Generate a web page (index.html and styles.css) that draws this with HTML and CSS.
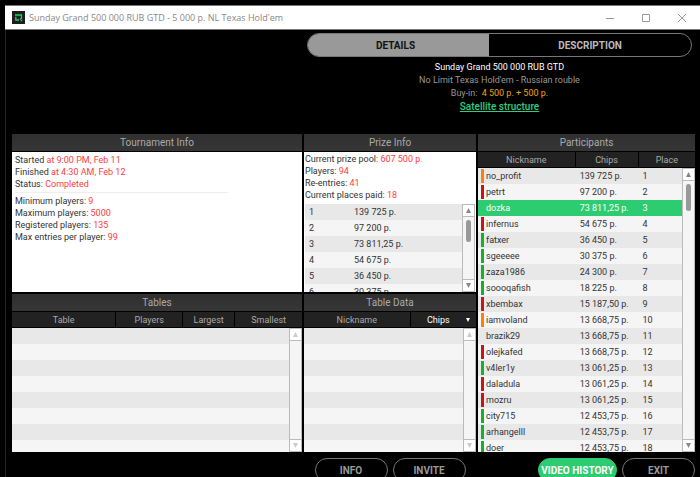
FILE: index.html
```
<!DOCTYPE html>
<html lang="en">
<head>
    <meta charset="UTF-8">
    <meta name="viewport" content="width=device-width, initial-scale=1.0">
    <title>Sunday Grand 500 000 RUB GTD</title>
    <link rel="stylesheet" href="styles.css">
</head>
<body>
    <div class="window">
        <header class="titlebar">
            <svg class="logo" viewBox="0 0 13 13">
                <rect width="13" height="13" fill="#1c1e20"/>
                <path d="M3 4H9.5V7.2L8 8.5M3.8 5.8V9H7" fill="none" stroke="#1fd655" stroke-width="1.3"/>
                <path d="M8.8 8.8H10.2V10.2H8.8Z" fill="#1fd655"/>
            </svg>
            <h1>Sunday Grand 500 000 RUB GTD - 5 000 p. NL Texas Hold'em</h1>
            <div class="window-controls">
                <button type="button" aria-label="Minimize"><svg viewBox="0 0 10 10"><path d="M1 5.5H9"/></svg></button>
                <button type="button" aria-label="Maximize"><svg viewBox="0 0 10 10"><path d="M1.5 1.5H8.5V8.5H1.5Z"/></svg></button>
                <button type="button" aria-label="Close"><svg viewBox="0 0 10 10"><path d="M1 1L9 9M9 1L1 9"/></svg></button>
            </div>
        </header>

        <div class="content">
            <!-- Tabs and tournament summary -->
            <section class="summary">
                <div class="tabs">
                    <button type="button" class="tab active">DETAILS</button>
                    <button type="button" class="tab">DESCRIPTION</button>
                </div>
                <p class="name">Sunday Grand 500 000 RUB GTD</p>
                <p>No Limit Texas Hold'em - Russian rouble</p>
                <p>Buy-in: <span class="buyin">4 500 p. + 500 p.</span></p>
                <p><a href="#">Satellite structure</a></p>
            </section>

            <section class="panel">
                <h2>Tournament Info</h2>
                <div class="info">
                    <p>Started <b>at 9:00 PM, Feb 11</b></p>
                    <p>Finished <b>at 4:30 AM, Feb 12</b></p>
                    <p>Status: <b>Completed</b></p>
                    <hr>
                    <p>Minimum players: <b>9</b></p>
                    <p>Maximum players: <b>5000</b></p>
                    <p>Registered players: <b>135</b></p>
                    <p>Max entries per player: <b>99</b></p>
                </div>
            </section>

            <section class="panel">
                <h2>Prize Info</h2>
                <div class="info prize">
                    <p>Current prize pool: <b>607 500 p.</b></p>
                    <p>Players: <b>94</b></p>
                    <p>Re-entries: <b>41</b></p>
                    <p>Current places paid: <b>18</b></p>
                </div>
                <div class="list prize-list">
                    <table>
                        <colgroup><col class="w-rank"><col></colgroup>
                        <tbody>
                            <tr><td>1</td><td>139 725 p.</td></tr>
                            <tr><td>2</td><td>97 200 p.</td></tr>
                            <tr><td>3</td><td>73 811,25 p.</td></tr>
                            <tr><td>4</td><td>54 675 p.</td></tr>
                            <tr><td>5</td><td>36 450 p.</td></tr>
                            <tr><td>6</td><td>30 375 p.</td></tr>
                        </tbody>
                    </table>
                    <div class="scrollbar">
                        <button type="button" aria-label="Scroll up"><svg viewBox="0 0 6 6"><path d="M3 0L6 6H0Z"/></svg></button>
                        <div class="thumb"></div>
                        <button type="button" aria-label="Scroll down"><svg viewBox="0 0 6 6"><path d="M0 0H6L3 6Z"/></svg></button>
                    </div>
                </div>
            </section>

            <section class="panel participants">
                <h2>Participants</h2>
                <div class="list with-head">
                    <table>
                        <colgroup><col class="w-nick"><col class="w-chips"><col></colgroup>
                        <thead>
                            <tr><th>Nickname</th><th>Chips</th><th>Place</th></tr>
                        </thead>
                        <tbody>
                            <tr><td><i class="mark orange"></i>no_profit</td><td>139 725 p.</td><td>1</td></tr>
                            <tr><td><i class="mark red"></i>petrt</td><td>97 200 p.</td><td>2</td></tr>
                            <tr class="selected"><td><i class="mark"></i>dozka</td><td>73 811,25 p.</td><td>3</td></tr>
                            <tr><td><i class="mark red"></i>infernus</td><td>54 675 p.</td><td>4</td></tr>
                            <tr><td><i class="mark green"></i>fatxer</td><td>36 450 p.</td><td>5</td></tr>
                            <tr><td><i class="mark green"></i>sgeeeee</td><td>30 375 p.</td><td>6</td></tr>
                            <tr><td><i class="mark green"></i>zaza1986</td><td>24 300 p.</td><td>7</td></tr>
                            <tr><td><i class="mark green"></i>soooqafish</td><td>18 225 p.</td><td>8</td></tr>
                            <tr><td><i class="mark red"></i>xbembax</td><td>15 187,50 p.</td><td>9</td></tr>
                            <tr><td><i class="mark orange"></i>iamvoland</td><td>13 668,75 p.</td><td>10</td></tr>
                            <tr><td><i class="mark"></i>brazik29</td><td>13 668,75 p.</td><td>11</td></tr>
                            <tr><td><i class="mark red"></i>olejkafed</td><td>13 668,75 p.</td><td>12</td></tr>
                            <tr><td><i class="mark green"></i>v4ler1y</td><td>13 061,25 p.</td><td>13</td></tr>
                            <tr><td><i class="mark red"></i>daladula</td><td>13 061,25 p.</td><td>14</td></tr>
                            <tr><td><i class="mark red"></i>mozru</td><td>13 061,25 p.</td><td>15</td></tr>
                            <tr><td><i class="mark green"></i>city715</td><td>12 453,75 p.</td><td>16</td></tr>
                            <tr><td><i class="mark green"></i>arhangelll</td><td>12 453,75 p.</td><td>17</td></tr>
                            <tr><td><i class="mark green"></i>doer</td><td>12 453,75 p.</td><td>18</td></tr>
                        </tbody>
                    </table>
                    <div class="scrollbar">
                        <button type="button" aria-label="Scroll up"><svg viewBox="0 0 6 6"><path d="M3 0L6 6H0Z"/></svg></button>
                        <div class="thumb long"></div>
                        <button type="button" aria-label="Scroll down"><svg viewBox="0 0 6 6"><path d="M0 0H6L3 6Z"/></svg></button>
                    </div>
                </div>
            </section>

            <section class="panel">
                <h2>Tables</h2>
                <div class="list with-head">
                    <table>
                        <colgroup><col class="w-table"><col class="w-players"><col class="w-largest"><col></colgroup>
                        <thead>
                            <tr><th>Table</th><th>Players</th><th>Largest</th><th>Smallest</th></tr>
                        </thead>
                    </table>
                    <div class="scrollbar disabled">
                        <button type="button" aria-label="Scroll up" disabled><svg viewBox="0 0 6 6"><path d="M3 0L6 6H0Z"/></svg></button>
                        <button type="button" aria-label="Scroll down" disabled><svg viewBox="0 0 6 6"><path d="M0 0H6L3 6Z"/></svg></button>
                    </div>
                </div>
            </section>

            <section class="panel">
                <h2>Table Data</h2>
                <div class="list with-head">
                    <table>
                        <colgroup><col class="w-name"><col></colgroup>
                        <thead>
                            <tr>
                                <th>Nickname</th>
                                <th><button type="button" class="sort"><span>Chips</span><svg viewBox="0 0 4 4"><path d="M0 0H4L2 4Z"/></svg></button></th>
                            </tr>
                        </thead>
                    </table>
                    <div class="scrollbar disabled">
                        <button type="button" aria-label="Scroll up" disabled><svg viewBox="0 0 6 6"><path d="M3 0L6 6H0Z"/></svg></button>
                        <button type="button" aria-label="Scroll down" disabled><svg viewBox="0 0 6 6"><path d="M0 0H6L3 6Z"/></svg></button>
                    </div>
                </div>
            </section>

            <div class="actions middle">
                <button type="button">INFO</button>
                <button type="button">INVITE</button>
            </div>
            <div class="actions right">
                <button type="button" class="primary">VIDEO HISTORY</button>
                <button type="button">EXIT</button>
            </div>
        </div>
    </div>
</body>
</html>
```
FILE: styles.css
```
* {
    box-sizing: border-box;
}

body {
    margin: 0;
    padding: 5px 0 0 5px;
    height: 100vh;
    overflow: hidden;
    background-color: #000;
    font-family: Roboto, "Liberation Sans", sans-serif;
    font-size: 10px;
    color: #333;
}

h1, h2, p {
    margin: 0;
    font-weight: normal;
}

button {
    margin: 0;
    padding: 0;
    border: none;
    background: none;
    font: inherit;
    color: inherit;
    cursor: pointer;
}

svg {
    display: block;
}

.window {
    border-left: 1px solid #222;
}

/* Title bar */
.titlebar {
    display: flex;
    align-items: center;
    height: 25px;
    margin-left: -1px;
    padding-left: 7px;
    background-color: #fff;
    border-top: 1px solid #777;
    border-bottom: 1px solid #777;
}

.logo {
    width: 13px;
    height: 13px;
}

.titlebar h1 {
    flex: 1;
    margin-left: 4px;
    font-family: "Open Sans", "Noto Sans", sans-serif;
    font-size: 9px;
    color: #888;
    white-space: nowrap;
}

.window-controls {
    display: flex;
}

.window-controls button {
    width: 36px;
    height: 23px;
    padding: 0 13px;
}

.window-controls svg {
    width: 10px;
    height: 10px;
    fill: none;
    stroke: #999;
}

/* Main grid */
.content {
    display: grid;
    grid-template-columns: minmax(0, 290fr) minmax(0, 172fr) minmax(0, 217fr);
    grid-template-rows: 99px 158px 158px;
    gap: 2px;
    padding: 3px 5px 0 6px;
}

.summary {
    grid-column: 2 / -1;
    padding: 0 3px;
    text-align: center;
    font-size: 9px;
    line-height: 13px;
    color: #999;
}

.tabs {
    display: flex;
    height: 24px;
    margin-bottom: 4px;
    border: 1px solid #777;
    border-radius: 12px;
    overflow: hidden;
    font-size: 10px;
}

.tab {
    flex: 202;
    font-weight: bold;
    color: #bbb;
}

.tab.active {
    flex: 175;
    padding-right: 6px;
    background-color: #999;
    color: #111;
}

.summary .name {
    color: #fff;
}

.buyin {
    margin-left: 2px;
    color: #f0a010;
}

.summary a {
    font-size: 10px;
    font-weight: 500;
    color: #2ecc80;
}

/* Panels */
.panel {
    display: flex;
    flex-direction: column;
    min-height: 0;
    background-color: #fff;
}

.panel h2 {
    height: 18px;
    line-height: 18px;
    background: linear-gradient(#303030, #363636);
    border-bottom: 1px solid #000;
    font-size: 10px;
    text-align: center;
    color: #aaa;
}

.participants {
    grid-row: 2 / 4;
    grid-column: 3;
}

.info {
    padding: 2px 3px;
    font-size: 9px;
    line-height: 12px;
}

.info b {
    font-weight: normal;
    color: #ff3b3b;
}

.info hr {
    width: 75%;
    height: 1px;
    margin: 2px 0;
    border: none;
    background-color: #eee;
}

.prize {
    padding: 1px 1px 3px;
}

/* Striped lists */
.list {
    position: relative;
    flex: 1;
    min-height: 0;
    overflow: hidden;
    background: repeating-linear-gradient(#e8e8e8 0 16px, #f5f5f5 16px 32px);
    font-size: 9px;
}

/* the 16px header row shifts the stripes by one */
.with-head {
    background: repeating-linear-gradient(#f5f5f5 0 16px, #e8e8e8 16px 32px);
}

.prize-list {
    margin: 0 1px;
}

table {
    width: 100%;
    table-layout: fixed;
    border-collapse: separate;
    border-spacing: 0;
}

th {
    height: 16px;
    padding: 0;
    background-color: #222;
    border-bottom: 1px solid #000;
    border-right: 1px solid #000;
    font-weight: normal;
    color: #aaa;
}

th:last-child {
    border-right: none;
}

td {
    height: 16px;
    padding: 0 4px;
    line-height: 16px;
    white-space: nowrap;
}

.participants td:first-child {
    padding-left: 3px;
}

.selected {
    background-color: #2ecc71;
    color: #fff;
}

.mark {
    display: inline-block;
    width: 3px;
    height: 14px;
    margin: 1px 2px 0 0;
    vertical-align: top;
}

.orange {
    background-color: #ff7f0e;
}

.red {
    background-color: #c4161c;
}

.green {
    background-color: #12b32c;
}

.w-rank { width: 45px; }
.w-nick { width: 45%; }
.w-chips { width: 29%; }
.w-table { width: 36%; }
.w-players { width: 23%; }
.w-largest { width: 18%; }
.w-name { width: 62%; }

.sort {
    display: flex;
    align-items: center;
    width: 100%;
    padding-right: 6px;
    color: #fff;
}

.sort span {
    flex: 1;
}

.sort svg {
    width: 4px;
    height: 4px;
    fill: #fff;
}

/* Scrollbars */
.scrollbar {
    position: absolute;
    top: 0;
    right: 0;
    bottom: 0;
    display: flex;
    flex-direction: column;
    align-items: center;
    width: 13px;
    background-color: #f5f5f5;
    border: 1px solid #bbb;
}

.with-head .scrollbar {
    top: 16px;
}

.scrollbar button {
    width: 100%;
    height: 12px;
    padding: 0 3px;
    background-color: #fff;
    border-bottom: 1px solid #bbb;
}

.scrollbar button:last-child {
    margin-top: auto;
    border-top: 1px solid #bbb;
    border-bottom: none;
}

.scrollbar svg {
    width: 5px;
    height: 5px;
    fill: #888;
}

.scrollbar.disabled svg {
    fill: #ccc;
}

.thumb {
    width: 5px;
    height: 22px;
    margin-top: 3px;
    border-radius: 3px;
    background-color: #999;
}

.thumb.long {
    height: 27px;
}

/* Bottom buttons */
.actions {
    display: flex;
    gap: 5px;
    padding-top: 4px;
}

.actions.middle {
    grid-column: 2;
    justify-content: center;
}

.actions.right {
    grid-column: 3;
    justify-content: flex-end;
}

.actions button {
    width: 73px;
    height: 24px;
    border: 1px solid #777;
    border-radius: 12px;
    font-weight: bold;
    color: #999;
    white-space: nowrap;
}

.actions .primary {
    width: 79px;
    background-color: #2ecc71;
    border-color: #2ecc71;
    color: #fff;
}
```
